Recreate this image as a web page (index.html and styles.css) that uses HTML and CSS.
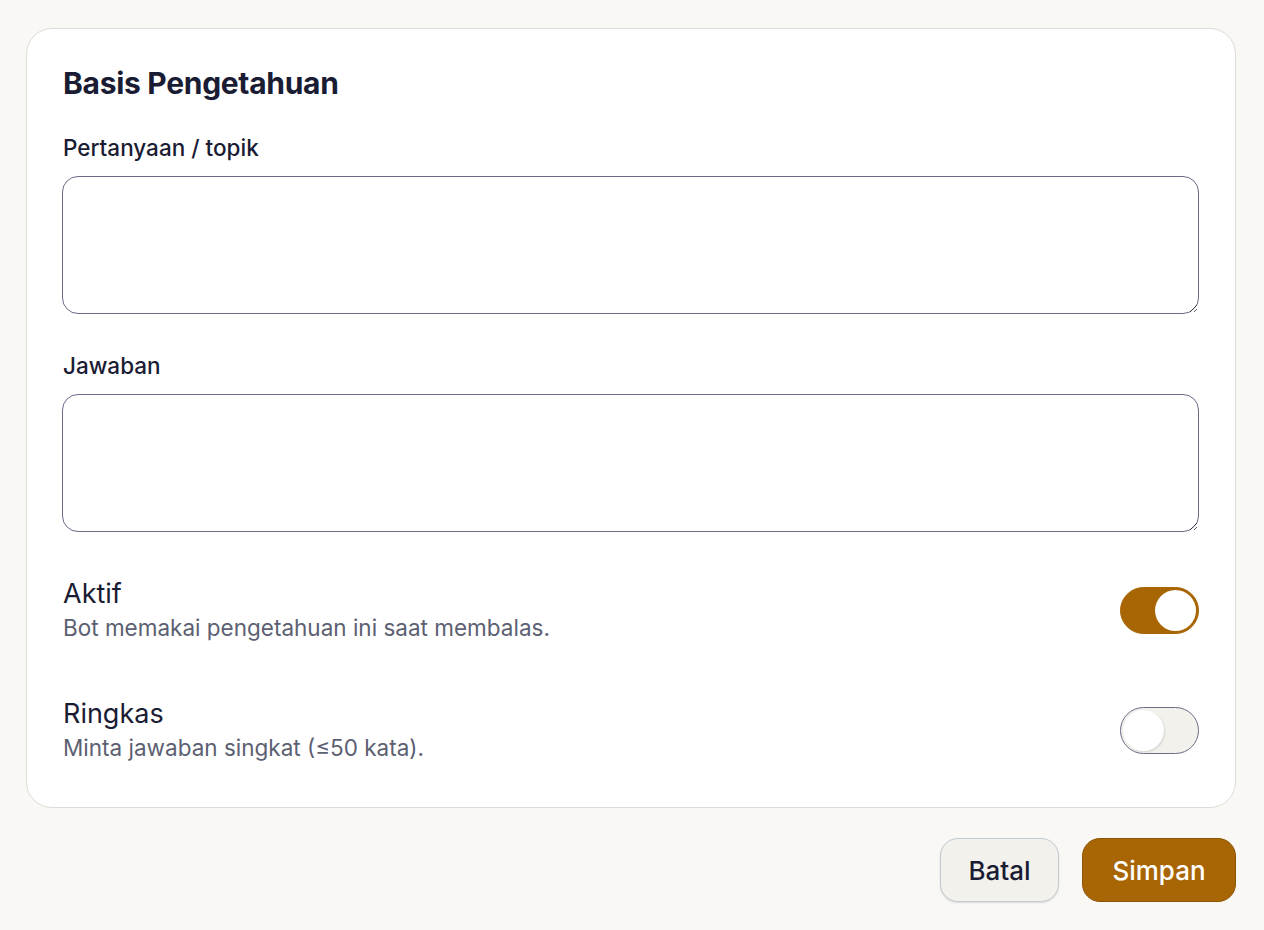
FILE: index.html
```html
<!DOCTYPE html>
<html lang="id">
<head>
<meta charset="utf-8">
<title>Basis Pengetahuan</title>
<link rel="stylesheet" href="styles.css">
</head>
<body>
<div class="page">
  <section class="card">
    <h1 class="title">Basis Pengetahuan</h1>
    <label class="field">
      <span class="label">Pertanyaan / topik</span>
      <textarea class="input"></textarea>
    </label>
    <label class="field">
      <span class="label">Jawaban</span>
      <textarea class="input"></textarea>
    </label>
    <div class="setting">
      <div class="setting-text">
        <div class="setting-name">Aktif</div>
        <div class="setting-desc">Bot memakai pengetahuan ini saat membalas.</div>
      </div>
      <span class="switch on"><span class="knob"></span></span>
    </div>
    <div class="setting">
      <div class="setting-text">
        <div class="setting-name">Ringkas</div>
        <div class="setting-desc">Minta jawaban singkat (≤50 kata).</div>
      </div>
      <span class="switch"><span class="knob"></span></span>
    </div>
  </section>
  <div class="actions">
    <button class="btn btn-secondary">Batal</button>
    <button class="btn btn-primary">Simpan</button>
  </div>
</div>
</body>
</html>
```
FILE: styles.css
```css
* { box-sizing: border-box; }
html, body { margin: 0; padding: 0; }
body {
  background: #f9f8f5;
  font-family: Inter, "Noto Sans", "Liberation Sans", sans-serif;
  color: #1a1c33;
}
.page {
  padding: 28px 28px 28px 26px;
}
.card {
  background: #ffffff;
  border: 1px solid #dedcd6;
  border-radius: 26px;
  padding: 36px 36px 43px 35px;
  display: flex;
  flex-direction: column;
}
.title {
  margin: 0 0 0 1px;
  font-size: 30px;
  line-height: 36px;
  font-weight: 700;
  letter-spacing: -0.3px;
  color: #1a1c33;
}
.field {
  display: flex;
  flex-direction: column;
  gap: 14px;
  margin-top: 33px;
}
.field + .field { margin-top: 38px; }
.label {
  font-size: 22.5px;
  line-height: 28px;
  font-weight: 500;
  color: #1a1c33;
  padding-left: 1px;
}
.input {
  display: block;
  width: 100%;
  height: 138px;
  border: 1px solid #6e6b88;
  border-radius: 16px;
  background: #fff;
  resize: vertical;
  font: inherit;
  padding: 12px 16px;
}
.setting {
  display: flex;
  align-items: center;
  justify-content: space-between;
  margin-top: 44px;
  padding-left: 1px;
}
.setting + .setting { margin-top: 52px; }
.setting-name {
  font-size: 27px;
  line-height: 36px;
  color: #1a1c33;
}
.setting-desc {
  font-size: 22.5px;
  line-height: 32px;
  color: #5c6072;
}
.switch {
  width: 79px;
  height: 47px;
  border-radius: 24px;
  background: #f2f1ec;
  border: 1px solid #6e6b88;
  display: flex;
  align-items: center;
  padding: 2px;
  flex-shrink: 0;
}
.switch .knob {
  width: 41px;
  height: 41px;
  border-radius: 50%;
  background: #fff;
  box-shadow: 1px 1px 2px rgba(0,0,0,0.12);
}
.switch.on {
  background: #a86503;
  border-color: #a86503;
  justify-content: flex-end;
}
.switch.on .knob { box-shadow: none; }
.actions {
  display: flex;
  justify-content: flex-end;
  gap: 23px;
  margin-top: 30px;
}
.btn {
  height: 64px;
  border-radius: 18px;
  font-family: inherit;
  font-size: 26px;
  font-weight: 500;
  padding: 0;
  cursor: pointer;
}
.btn-secondary {
  background: #f2f1ec;
  color: #1a1c33;
  border: 1px solid #c4cad2;
  box-shadow: 0 1px 2px rgba(0,0,0,0.12);
  width: 119px;
}
.btn-primary {
  background: #a86503;
  color: #ffffff;
  border: 1px solid #8e5506;
  width: 154px;
}
```
